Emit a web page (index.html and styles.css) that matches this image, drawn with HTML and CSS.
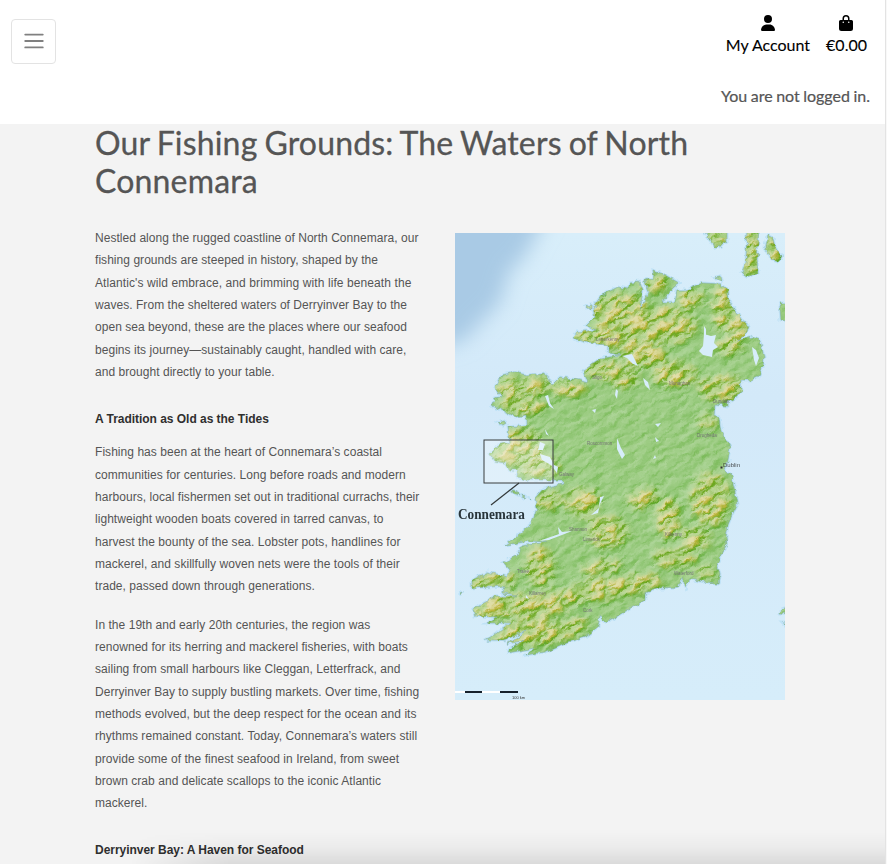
FILE: index.html
```html
<!DOCTYPE html>
<html lang="en">
<head>
<meta charset="utf-8">
<title>Our Fishing Grounds</title>
<link rel="stylesheet" href="styles.css">
</head>
<body>
<div class="page">
<header class="header">
  <div class="bar">
    <button class="menu" aria-label="Menu"><svg width="24" height="24" viewBox="0 0 30 30"><path d="M4 7h22M4 15h22M4 23h22" stroke="#808080" stroke-width="2.2" stroke-linecap="round"/></svg></button>
    <nav class="links">
      <a class="link"><svg width="14" height="16" viewBox="0 0 448 512"><path d="M224 256A128 128 0 1 0 224 0a128 128 0 0 0 0 256zm-46 48C80 304 0 384 0 482c0 17 13 30 30 30h388c17 0 30-13 30-30 0-98-80-178-178-178z"/></svg><span>My Account</span></a>
      <a class="link"><svg width="14" height="16" viewBox="0 0 448 512"><path fill-rule="evenodd" d="M112 160v-48a112 112 0 0 1 224 0v48h64a48 48 0 0 1 48 48v224a80 80 0 0 1-80 80H80a80 80 0 0 1-80-80V208a48 48 0 0 1 48-48zm48 0h128v-48a64 64 0 0 0-128 0zM136 256a24 24 0 1 0 0-48 24 24 0 0 0 0 48zm176 0a24 24 0 1 0 0-48 24 24 0 0 0 0 48z"/></svg><span>€0.00</span></a>
    </nav>
  </div>
  <p class="status">You are not logged in.</p>
</header>
<main class="content">
  <h1>Our Fishing Grounds: The Waters of North Connemara</h1>
  <div class="columns">
    <article class="story">
      <p>Nestled along the rugged coastline of North Connemara, our<br>fishing grounds are steeped in history, shaped by the<br><span class="loose">Atlantic's wild embrace, and brimming with life beneath the</span><br>waves. From the sheltered waters of Derryinver Bay to the<br>open sea beyond, these are the places where our seafood<br>begins its journey—sustainably caught, handled with care,<br>and brought directly to your table.</p>
      <h2>A Tradition as Old as the Tides</h2>
      <p>Fishing has been at the heart of Connemara’s coastal<br>communities for centuries. Long before roads and modern<br>harbours, local fishermen set out in traditional currachs, their<br>lightweight wooden boats covered in tarred canvas, to<br>harvest the bounty of the sea. Lobster pots, handlines for<br>mackerel, and skillfully woven nets were the tools of their<br>trade, passed down through generations.</p>
      <p>In the 19th and early 20th centuries, the region was<br>renowned for its herring and mackerel fisheries, with boats<br>sailing from small harbours like Cleggan, Letterfrack, and<br>Derryinver Bay to supply bustling markets. Over time, fishing<br>methods evolved, but the deep respect for the ocean and its<br>rhythms remained constant. Today, Connemara’s waters still<br>provide some of the finest seafood in Ireland, from sweet<br>brown crab and delicate scallops to the iconic Atlantic<br>mackerel.</p>
      <h2>Derryinver Bay: A Haven for Seafood</h2>
    </article>
    <svg class="map" width="330" height="467" viewBox="455 233 330 467">
      <defs>
        <linearGradient id="sea" x1="0" y1="0" x2="0" y2="1"><stop offset="0" stop-color="#d8eefa"/><stop offset=".35" stop-color="#d3e9f9"/><stop offset="1" stop-color="#d6edfa"/></linearGradient>
        <filter id="soft" x="-30%" y="-30%" width="160%" height="160%"><feGaussianBlur stdDeviation="10"/></filter>
        <filter id="blob" x="-30%" y="-30%" width="160%" height="160%"><feGaussianBlur stdDeviation="3"/></filter>
        <filter id="coast" filterUnits="userSpaceOnUse" x="455" y="233" width="330" height="467" color-interpolation-filters="sRGB"><feTurbulence type="fractalNoise" baseFrequency=".17" numOctaves="2" seed="4"/><feDisplacementMap in="SourceGraphic" scale="6" xChannelSelector="R" yChannelSelector="G"/></filter>
        <filter id="relief" filterUnits="userSpaceOnUse" x="320" y="160" width="600" height="620" color-interpolation-filters="sRGB">
          <feTurbulence type="fractalNoise" baseFrequency=".06 .14" numOctaves="3" seed="12" result="n"/>
          <feColorMatrix in="n" values="0 0 0 0 0 0 0 0 0 0 0 0 0 0 0 1.8 0 0 0 -.35" result="height"/>
          <feGaussianBlur in="SourceAlpha" stdDeviation="4" result="mask"/>
          <feComposite in="height" in2="mask" operator="in" result="hills"/>
          <feDiffuseLighting in="hills" surfaceScale="6" diffuseConstant=".66" lighting-color="#fff"><feDistantLight azimuth="250" elevation="50"/></feDiffuseLighting>
        </filter>
        <filter id="patches" filterUnits="userSpaceOnUse" x="320" y="160" width="600" height="620" color-interpolation-filters="sRGB">
          <feGaussianBlur in="SourceGraphic" stdDeviation="3" result="g"/>
          <feTurbulence type="fractalNoise" baseFrequency=".06 .14" numOctaves="3" seed="12"/>
          <feColorMatrix values="0 0 0 0 0 0 0 0 0 0 0 0 0 0 0 5 0 0 0 -2.2" result="n"/>
          <feComposite in="g" in2="n" operator="in"/>
        </filter>
        <path id="land" d="M653 270L665 275 679 283 673 288 662 302 675 302 677 290 687 290 702 283 720 284 728 290 729 300 735 310 743 322 749 325 747 332 738 340 752 337 760 340 764 357 763 367 758 377 752 380 741 380 741 390 738 397 728 402 728 406 715 405 714 415 720 418 722 432 730 447 728 460 725 470 732 477 735 492 737 505 732 515 728 525 726 538 727 545 717 563 720 575 718 583 703 582 690 579 685 588 682 578 678 587 660 588 645 593 645 600 633 607 620 615 605 622 600 615 598 627 585 637 565 643 545 652 527 655 533 648 508 653 510 648 525 640 507 644 527 630 505 640 485 640 498 633 510 623 487 623 497 617 475 616 473 609 495 597 518 595 503 593 505 586 472 588 472 580 488 572 508 577 510 570 503 562 518 555 522 546 547 542 530 541 505 545 518 535 532 523 537 508 535 498 543 489 563 485 563 480 553 480 528 480 517 478 518 470 510 470 505 463 495 461 490 453 498 445 510 442 508 427 527 425 527 415 515 417 507 413 492 405 495 398 502 397 495 387 502 375 515 372 527 375 545 373 552 385 560 377 578 380 588 383 583 370 602 358 622 355 608 353 608 345 588 343 573 338 578 332 595 330 587 325 595 317 593 308 602 295 618 287 627 289 630 283 640 282 643 290 640 310 648 293 645 280 654 278Z
          M702 228h25v14l-11 6-4-6zM747 228h12l-2 32 1 13-12 4-4-5 4-8zM767 235l6 3 3 12 6 6-3 6-7-2-7-12zM792 303l-11 0-1 5 1 12 11 2zM792 605l-10 4-2 4 12 1zM792 623h-9l3 3z
          M498 423l5-2 3 2-3 2zM512 490l4 1 3 4-6-2zM521 494l4 3-2 1zM587 306l4-1v4zM528 496l3 3zM460 593l3-2-2 3zM715 277l5-1 1 4z"/>
        <clipPath id="landclip"><use href="#land"/></clipPath>
        <g id="mountains">
          <ellipse cx="511" cy="388" rx="13" ry="10"/><ellipse cx="534" cy="385" rx="14" ry="9"/><ellipse cx="568" cy="388" rx="18" ry="7"/><ellipse cx="523" cy="405" rx="22" ry="8"/><ellipse cx="520" cy="437" rx="20" ry="7"/><ellipse cx="519" cy="452" rx="25" ry="12"/><ellipse cx="540" cy="467" rx="20" ry="8"/>
          <ellipse cx="620" cy="311" rx="30" ry="17"/><ellipse cx="588" cy="337" rx="13" ry="6"/><ellipse cx="617" cy="335" rx="25" ry="12"/><ellipse cx="603" cy="369" rx="17" ry="10"/><ellipse cx="653" cy="283" rx="14" ry="8"/><ellipse cx="666" cy="325" rx="30" ry="18"/><ellipse cx="643" cy="355" rx="22" ry="12"/><ellipse cx="674" cy="374" rx="22" ry="12"/><ellipse cx="625" cy="378" rx="14" ry="9"/><ellipse cx="723" cy="306" rx="10" ry="24"/><ellipse cx="739" cy="327" rx="9" ry="13"/><ellipse cx="729" cy="346" rx="13" ry="8"/><ellipse cx="721" cy="388" rx="22" ry="12"/><ellipse cx="691" cy="299" rx="12" ry="10"/><ellipse cx="751" cy="253" rx="8" ry="24"/><ellipse cx="774" cy="249" rx="7" ry="13"/><ellipse cx="717" cy="238" rx="11" ry="6"/>
          <ellipse cx="548" cy="500" rx="13" ry="9"/><ellipse cx="582" cy="502" rx="17" ry="14"/><ellipse cx="608" cy="532" rx="21" ry="15"/><ellipse cx="643" cy="498" rx="15" ry="9" transform="rotate(-25 643 498)"/><ellipse cx="668" cy="518" rx="11" ry="20"/><ellipse cx="710" cy="499" rx="19" ry="26"/><ellipse cx="696" cy="538" rx="15" ry="10"/><ellipse cx="675" cy="558" rx="21" ry="9"/><ellipse cx="601" cy="567" rx="20" ry="6" transform="rotate(-10 601 567)"/><ellipse cx="540" cy="566" rx="14" ry="20"/><ellipse cx="492" cy="581" rx="24" ry="7" transform="rotate(-8 492 581)"/><ellipse cx="500" cy="606" rx="28" ry="11" transform="rotate(-12 500 606)"/><ellipse cx="545" cy="604" rx="32" ry="12" transform="rotate(-12 545 604)"/><ellipse cx="605" cy="589" rx="42" ry="10" transform="rotate(-8 605 589)"/><ellipse cx="520" cy="630" rx="28" ry="8" transform="rotate(-20 520 630)"/><ellipse cx="553" cy="632" rx="37" ry="9" transform="rotate(-14 553 632)"/><ellipse cx="642" cy="581" rx="20" ry="7"/><ellipse cx="705" cy="572" rx="9" ry="6"/><ellipse cx="707" cy="421" rx="9" ry="6"/>
        </g>
      </defs>
      <rect x="455" y="233" width="330" height="467" fill="url(#sea)"/>
      <path d="M430 205H552L524 258 510 270 500 303 478 325 465 340 430 350Z" fill="#a9cae5" filter="url(#soft)"/>
      <g filter="url(#coast)">
        <use href="#land" fill="none" stroke="#bfe2f6" stroke-width="3"/>
        <g clip-path="url(#landclip)" class="terrain">
          <rect x="450" y="228" width="340" height="477" fill="#9acb80"/>
          <use href="#mountains" fill="#b4cf7c" opacity=".7" filter="url(#blob)"/>
          <g transform="rotate(-30 620 466)" filter="url(#patches)"><use href="#mountains" fill="#d8d48e" transform="rotate(30 620 466)"/></g>
          <g class="shade"><g transform="rotate(-30 620 466)" filter="url(#relief)"><g transform="rotate(30 620 466)"><rect x="440" y="220" width="360" height="495" fill-opacity=".14"/><use href="#mountains" fill-opacity=".8"/></g></g></g>
        </g>
        <use href="#land" fill="none" stroke="#7fa998" stroke-width=".5"/>
      </g>
      <g fill="#d7edfb">
        <path d="M704 334l7 2 5-1-2 8 4 4-5 3-1 7-9-2-4-4 4-5zM752 347l4 3 3 8-3 8-2-6zM622 356l10-2 6 12-5-2-6-6zM643 378l5 4 2 8-5-5zM545 396l3-1 2 8 4 6-5-3zM616 389l2 2-1 8-2-4zM592 410l4-1-1 4zM540 442l5 2-2 6h-5zM540 454l10 3 4 8 4 2-1 6-6-8-9-5zM545 429l4 7-3-2zM617 438l4 10 4 7-3 4-5-10zM604 496l-4 8-2 9-7 2 8-7 1-11zM558 527l4 5 10-1-10 4-13 5-10 1 20-7zM655 424l6-1-3 4zM655 437l4 4-3 1zM655 455l1 3-3 1zM704 326l2 3v6h-2zM526 595l3 4-3-1z"/>
      </g>
      <rect x="484" y="440" width="69" height="43" fill="#fff" fill-opacity=".28" stroke="#393d3d"/>
      <path d="M519 483L491 505" stroke="#323838" stroke-width="1.2"/>
      <text class="place" x="458" y="519" textLength="67" lengthAdjust="spacingAndGlyphs">Connemara</text>
      <g class="city"><text class="capital" x="723" y="467">Dublin</text><text x="669" y="385">Monaghan</text><text x="587" y="445">Roscommon</text><text x="559" y="476">Galway</text><text x="697" y="437">Drogheda</text><text x="713" y="403">Dundalk</text><text x="665" y="536">Kilkenny</text><text x="569" y="531">Shannon</text><text x="583" y="541">Limerick</text><text x="517" y="573">Tralee</text><text x="529" y="595">Killarney</text><text x="583" y="612">Cork</text><text x="674" y="575">Waterford</text><text x="596" y="341">Letterkenny</text><text x="592" y="379">Sligo</text></g>
      <path d="M720.500 466.500h2v2h-2z" fill="#333"/>
      <path d="M455 692h10M482 692h18" stroke="#fff" stroke-width="2"/><path d="M465 692h17M500 692h18" stroke="#17212b" stroke-width="2"/>
      <text class="scale" x="512" y="699">100 km</text>
    </svg>
  </div>
</main>
</div>
<div class="fade"></div>
</body>
</html>
```
FILE: styles.css
```css
* { box-sizing: border-box; }
html, body { height: 100%; overflow: hidden; }
body { margin: 0; background: #f8f8f8; color: #555; font-family: Lato, sans-serif; }
.page { width: 886px; height: 864px; overflow: hidden; background: #f3f3f3; border-right: 1px solid #e3e3e3; }
.header { height: 124px; background: #fff; }
.bar { display: flex; justify-content: space-between; padding: 15px 18px 0 11px; height: 85px; }
.menu { display: flex; align-items: center; justify-content: center; width: 45px; height: 45px; margin-top: 4px; padding: 0 0 2px; background: #fff; border: 1px solid #e3e3e3; border-radius: 4px; }
.links { display: flex; gap: 16px; color: #000; font-size: 16px; line-height: 24px; -webkit-text-stroke: .1px; }
.link { display: flex; flex-direction: column; align-items: center; }
.link + .link svg { margin-right: 1px; }
.link span { margin-top: 2px; }
.status { margin: 0; padding-right: 15px; text-align: right; font-size: 16px; line-height: 22px; word-spacing: -.6px; -webkit-text-stroke: .2px; }
.content { padding: 0 100px 0 95px; }
h1 { margin: 0; font-size: 32px; font-weight: 400; line-height: 38.4px; letter-spacing: .17px; word-spacing: -1.4px; -webkit-text-stroke: .3px; }
.columns { display: flex; align-items: flex-start; gap: 30px; padding-top: 32px; }
.story { width: 330px; margin-top: -6px; font-family: "Liberation Sans", sans-serif; font-size: 12px; white-space: nowrap; letter-spacing: .045px; }
.loose { letter-spacing: .09px; }
.story p { margin: 0 0 16px; line-height: 22.35px; }
.story h2 { margin: 26.5px 0 13.5px; font-size: 12px; font-weight: 700; line-height: 18px; letter-spacing: -.03px; color: #2f2f2f; }
.map { display: block; flex: none; overflow: hidden; }
.terrain { isolation: isolate; }
.shade { mix-blend-mode: overlay; opacity: .75; }
.place { font: 700 14px "Liberation Serif", serif; fill: #28343a; }
.city { font: 4.5px "Liberation Sans", sans-serif; fill: #6b6072; opacity: .8; }
.capital { font-size: 6px; fill: #222; }
.scale { font: 4px "Liberation Sans", sans-serif; fill: #333; }
.fade { position: fixed; left: 130px; right: 2px; bottom: 0; height: 32px; background: linear-gradient(to bottom, transparent, rgba(0,0,0,.03) 50%, rgba(0,0,0,.1)); mask-image: linear-gradient(to right, transparent, #000 100px); }
```
